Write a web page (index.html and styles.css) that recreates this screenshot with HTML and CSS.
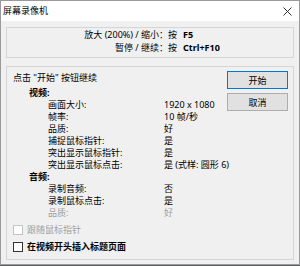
FILE: index.html
```html
<!DOCTYPE html>
<html>
<head>
    <title>屏幕录像机</title>
    <link rel="stylesheet" href="styles.css">
</head>
<body>

<div class="window">
    <div class="titlebar">
        <span class="title">屏幕录像机</span>
        <svg class="close" width="9" height="9" viewBox="0 0 9 9">
            <path d="M0.5 0.5 L8.5 8.5 M8.5 0.5 L0.5 8.5" stroke="#333" stroke-width="1" fill="none"/>
        </svg>
    </div>

    <div class="client">
        <div class="hotkeys">
            <span class="hk-label">放大 (200%) / 缩小：按</span>
            <span class="hk-key">F5</span>
            <span class="hk-label">暂停 / 继续：按</span>
            <span class="hk-key">Ctrl+F10</span>
        </div>

        <div class="panel">
            <div class="info">
                <div class="hint">点击 "开始" 按钮继续</div>
                <div class="stats">
                    <div class="section">视频:</div>
                    <div class="label">画面大小:</div><div class="value">1920 x 1080</div>
                    <div class="label">帧率:</div><div class="value">10 帧/秒</div>
                    <div class="label">品质:</div><div class="value">好</div>
                    <div class="label">捕捉鼠标指针:</div><div class="value">是</div>
                    <div class="label">突出显示鼠标指针:</div><div class="value">是</div>
                    <div class="label">突出显示鼠标点击:</div><div class="value">是 (式样: 圆形 6)</div>
                    <div class="section">音频:</div>
                    <div class="label">录制音频:</div><div class="value">否</div>
                    <div class="label">录制鼠标点击:</div><div class="value">是</div>
                    <div class="label disabled">品质:</div><div class="value disabled">好</div>
                </div>

                <label class="check disabled"><span class="box"></span>跟随鼠标指针</label>
                <label class="check strong"><span class="box"></span>在视频开头插入标题页面</label>
            </div>

            <div class="buttons">
                <button class="btn default">开始</button>
                <button class="btn">取消</button>
            </div>
        </div>
    </div>
</div>

</body>
</html>
```

FILE: styles.css
```css
body {
    margin: 0;
    padding: 0;
    background: #5c6466;
    font-family: "Noto Sans", "Noto Sans CJK SC", sans-serif;
    font-size: 9px;
    color: #000;
}

.window {
    width: 298px;
    height: 263px;
    border: 1px solid #9a9a9a;
    background: #f0f0f0;
    display: flex;
    flex-direction: column;
}

.titlebar {
    height: 20px;
    background: #fff;
    display: flex;
    align-items: center;
    justify-content: space-between;
    padding: 0 7px 0 2px;
}
.title {
    line-height: 12px;
}
.close {
    display: block;
}

.client {
    padding: 6px 5px 0 5px;
}

/* hot key summary */
.hotkeys {
    display: grid;
    grid-template-columns: 170px 1fr;
    column-gap: 6px;
    border: 1px solid #d5d5d5;
    padding: 0 0 3px 0;
    height: 26px;
    line-height: 13px;
}
.hk-label {
    text-align: right;
}
.hk-key {
    font-weight: 700;
}

/* settings panel */
.panel {
    margin-top: 8px;
    border: 1px solid #d5d5d5;
    height: 192px;
    display: flex;
}
.info {
    flex: 1;
    min-width: 0;
    padding: 5px 0 0 6px;
    white-space: nowrap;
    line-height: 12px;
}
.hint {
    margin-bottom: 3px;
}
.stats {
    display: grid;
    grid-template-columns: 151px 1fr;
}
.section {
    grid-column: 1 / -1;
    padding-left: 16px;
    font-weight: 700;
}
.label {
    padding-left: 35px;
}
.disabled {
    color: #a0a0a0;
}

.check {
    display: flex;
    align-items: center;
    margin-top: 5px;
}
.check .box {
    width: 8px;
    height: 8px;
    border: 1px solid #333;
    background: #fff;
    margin-right: 4px;
}
.check.disabled .box {
    border-color: #c4c4c4;
}
.check.strong {
    font-weight: 700;
}

.buttons {
    display: flex;
    flex-direction: column;
    gap: 4px;
    padding: 4px 5px 0 0;
}
.btn {
    width: 61px;
    height: 18px;
    font-family: inherit;
    font-size: 9px;
    background: #e1e1e1;
    border: 1px solid #adadad;
    padding: 0;
    color: #000;
}
.btn.default {
    border-color: #0078d7;
}
```
